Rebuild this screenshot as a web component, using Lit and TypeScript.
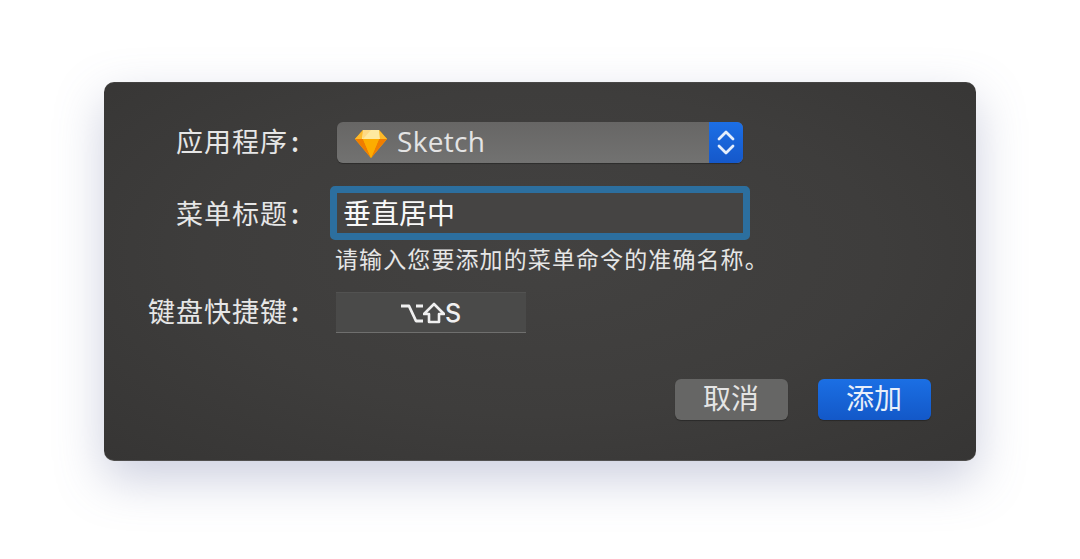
import { LitElement, html, css } from "lit";
import { customElement } from "lit/decorators.js";

@customElement("app-root")
export class AppRoot extends LitElement {
  static styles = css`
    :host {
      display: block;
      width: 1080px;
      height: 559px;
      background: #fff;
      overflow: hidden;
      font-family: "Noto Sans CJK SC", "Noto Sans", sans-serif;
      --t: #e6e6e6;
    }
    .page {
      box-sizing: border-box;
      height: 559px;
      padding: 82px 104px 98px;
    }
    .dialog {
      box-sizing: border-box;
      height: 379px;
      border-radius: 10px;
      background: radial-gradient(ellipse at 50% 45%, #434241 0%, #3e3d3c 55%, #363534 100%);
      box-shadow: 0 18px 48px rgba(105, 115, 160, 0.34), inset 0 1px 0 rgba(255, 255, 255, 0.06), inset 0 -1px 0 rgba(255, 255, 255, 0.12);
      padding: 40px 45px 41px 0;
      display: flex;
      flex-direction: column;
      justify-content: space-between;
    }
    .form {
      display: grid;
      grid-template-columns: 198px 1fr;
      column-gap: 35px;
      align-items: center;
    }
    .label {
      font-size: 27px;
      line-height: 37px;
      height: 41px;
      color: var(--t);
      text-align: right;
      white-space: nowrap;
      letter-spacing: 1px;
    }
    .colon {
      display: inline-block;
      width: 14px;
      text-align: center;
      letter-spacing: 0;
      font-weight: 500;
    }
    .popup {
      grid-column: 2;
      width: 406px;
      height: 41px;
      border-radius: 6px;
      background: linear-gradient(#676665, #727271);
      box-shadow: 0 1px 1px rgba(0, 0, 0, 0.3);
      display: flex;
      align-items: center;
      overflow: hidden;
    }
    .gem {
      width: 32px;
      height: 30px;
      margin-left: 18px;
      flex: none;
    }
    .sketch {
      font-family: "Open Sans", "Noto Sans", sans-serif;
      font-size: 28px;
      font-weight: 500;
      line-height: 38px;
      height: 41px;
      color: #e4e4e4;
      margin-left: 10px;
      flex: 1;
      letter-spacing: 0.3px;
    }
    .stepper {
      width: 34px;
      height: 41px;
      background: linear-gradient(#1c6fe6, #1558ca);
      display: flex;
      align-items: center;
      justify-content: center;
      flex: none;
    }
    .stepper svg {
      width: 18px;
      height: 29px;
    }
    .label.second {
      margin-top: 25px;
    }
    .input-ring {
      margin: 23px 0 0 -7px;
      box-sizing: border-box;
      width: 420px;
      height: 54px;
      border: 7px solid #2c6f9f;
      border-radius: 5px;
      background: #454443;
      display: flex;
      align-items: center;
      padding: 0 0 3px 6px;
      font-size: 28px;
      color: #f8f8f8;
    }
    .hint {
      grid-column: 2;
      margin: 4px 0 0 -2px;
      height: 31px;
      font-size: 23px;
      line-height: 29px;
      letter-spacing: 1.1px;
      color: #e6e6e6;
      white-space: nowrap;
    }
    .label.third {
      margin-top: 17px;
    }
    .shortcut {
      margin: 17px 0 0 -1px;
      box-sizing: border-box;
      width: 190px;
      height: 41px;
      background: #4a4a49;
      border-top: 1px solid #525251;
      border-bottom: 1px solid #6f6f6e;
      display: flex;
      align-items: center;
      justify-content: center;
      color: #f0f0f0;
      font-family: Inter, "Liberation Sans", sans-serif;
      font-size: 25px;
      font-weight: 500;
    }
    .shortcut svg {
      width: 22px;
      height: 22px;
    }
    .actions {
      display: flex;
      justify-content: flex-end;
      gap: 30px;
    }
    button {
      width: 113px;
      height: 41px;
      border: 0;
      border-radius: 6px;
      font: inherit;
      font-size: 28px;
      line-height: 37px;
      padding: 0 1px 4px 0;
      box-shadow: 0 1px 1px rgba(0, 0, 0, 0.3);
    }
    .cancel {
      background: #666665;
      color: #e4e4e4;
    }
    .add {
      background: linear-gradient(#1b6fe4, #1358c8);
      color: #e8effa;
    }
  `;

  render() {
    return html`
      <div class="page">
        <div class="dialog">
          <div class="form">
            <div class="label">应用程序<span class="colon">:</span></div>
            <div class="popup">
              <svg class="gem" viewBox="0 0 32 30">
                <path d="M8 2 24 2 32 11 16 30 0 11Z" fill="#fdb300" />
                <path d="M0 11 8 11 16 30Z" fill="#f07d00" />
                <path d="M32 11 24 11 16 30Z" fill="#f07d00" />
                <path d="M8 11 24 11 16 30Z" fill="#fdad00" />
                <path d="M8 2 7 11 0 11Z" fill="#fdb92b" />
                <path d="M24 2 25 11 32 11Z" fill="#fdb92b" />
                <path d="M8 2 24 2 25 11 7 11Z" fill="#fee9a0" />
                <path d="M8 2 16 2 8 11Z" fill="#fed983" />
              </svg>
              <span class="sketch">Sketch</span>
              <div class="stepper">
                <svg viewBox="0 0 18 29" fill="none" stroke="#e4eefc" stroke-width="2.8" stroke-linecap="round" stroke-linejoin="round">
                  <path d="M2 11 9 4 16 11" />
                  <path d="M2 18 9 25 16 18" />
                </svg>
              </div>
            </div>
            <div class="label second">菜单标题<span class="colon">:</span></div>
            <div class="input-ring">垂直居中</div>
            <div class="hint">请输入您要添加的菜单命令的准确名称。</div>
            <div class="label third">键盘快捷键<span class="colon">:</span></div>
            <div class="shortcut">
              <svg viewBox="0 0 22 22" fill="none" stroke="#f0f0f0" stroke-width="2.8" stroke-linejoin="round">
                <path d="M0 4H8L15 19H22M15 4H22" />
              </svg>
              <svg viewBox="0 0 22 22" fill="none" stroke="#f0f0f0" stroke-width="2.6" stroke-linejoin="round">
                <path d="M11 2 21 12H16V20H6V12H1Z" />
              </svg>
              <span>S</span>
            </div>
          </div>
          <div class="actions">
            <button class="cancel">取消</button>
            <button class="add">添加</button>
          </div>
        </div>
      </div>
    `;
  }
}
